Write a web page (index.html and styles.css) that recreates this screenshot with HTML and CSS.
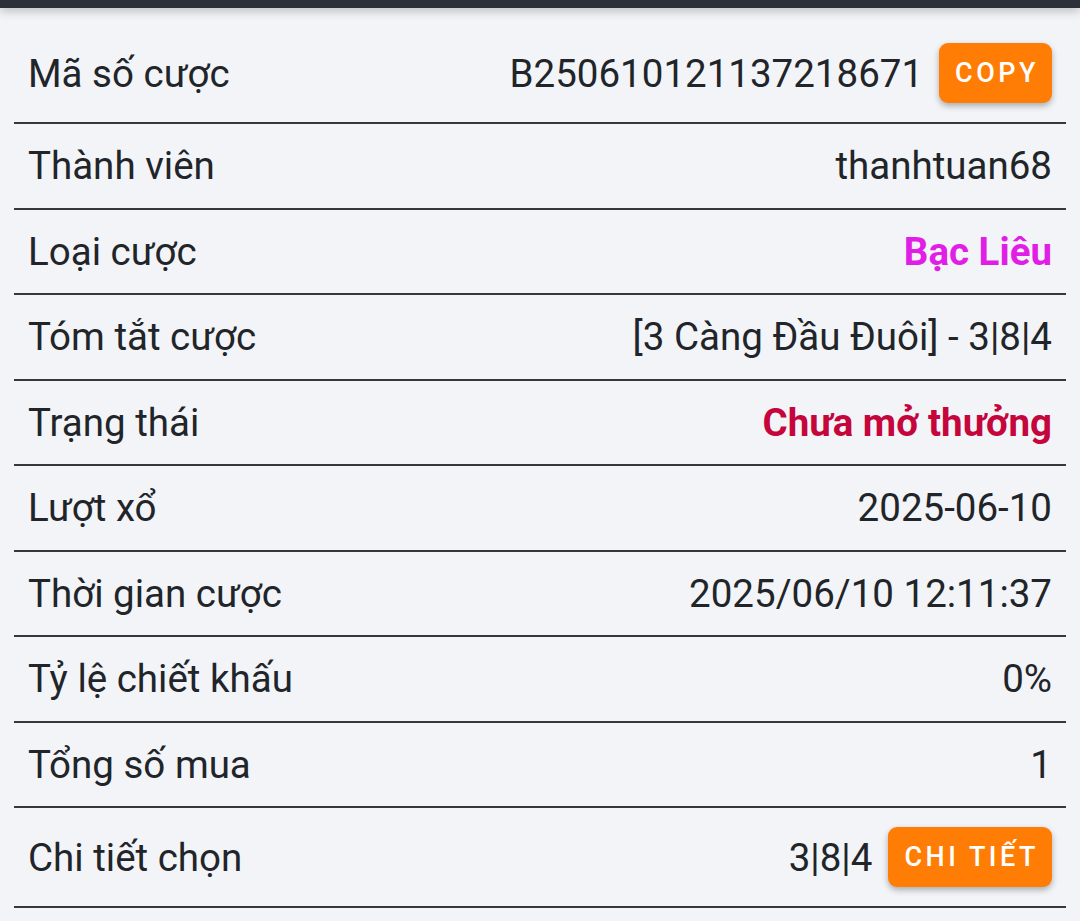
FILE: index.html
```html
<!DOCTYPE html>
<html lang="vi">
<head>
  <meta charset="UTF-8">
  <title>Chi tiết cược</title>
  <meta name="viewport" content="width=device-width, initial-scale=1">
  <link rel="stylesheet" href="styles.css">
</head>
<body>

<div class="topbar"></div>

<div class="details">
  <div class="row row-btn">
    <span class="label">Mã số cược</span>
    <span class="value">B250610121137218671</span>
    <button class="btn">COPY</button>
  </div>
  <div class="row">
    <span class="label">Thành viên</span>
    <span class="value">thanhtuan68</span>
  </div>
  <div class="row">
    <span class="label">Loại cược</span>
    <span class="value pink">Bạc Liêu</span>
  </div>
  <div class="row">
    <span class="label">Tóm tắt cược</span>
    <span class="value">[3 Càng Đầu Đuôi] - 3|8|4</span>
  </div>
  <div class="row">
    <span class="label">Trạng thái</span>
    <span class="value red">Chưa mở thưởng</span>
  </div>
  <div class="row">
    <span class="label">Lượt xổ</span>
    <span class="value">2025-06-10</span>
  </div>
  <div class="row">
    <span class="label">Thời gian cược</span>
    <span class="value">2025/06/10 12:11:37</span>
  </div>
  <div class="row">
    <span class="label">Tỷ lệ chiết khấu</span>
    <span class="value">0%</span>
  </div>
  <div class="row">
    <span class="label">Tổng số mua</span>
    <span class="value">1</span>
  </div>
  <div class="row row-btn">
    <span class="label">Chi tiết chọn</span>
    <span class="value">3|8|4</span>
    <button class="btn">CHI TIẾT</button>
  </div>
</div>

</body>
</html>
```

FILE: styles.css
```css
body {
  margin: 0;
  font-family: Roboto, "Noto Sans", sans-serif;
  background-color: #f3f4f8;
  color: #212529;
}
.topbar {
  height: 8px;
  background: #2b303a;
  box-shadow: 0 3px 10px rgba(0,0,0,0.25);
}
.details {
  margin: 16px 14px 0;
}
.row {
  display: flex;
  align-items: center;
  gap: 16px;
  height: 85.5px;
  box-sizing: border-box;
  padding: 0 14px;
  border-bottom: 2px solid #34373d;
  font-size: 38.5px;
}
.row-btn {
  height: 100px;
}
.label {
  flex: 1;
}
.value {
  text-align: right;
}
.pink {
  color: #e01ee6;
  font-weight: 700;
}
.red {
  color: #c4063c;
  font-weight: 700;
}
.btn {
  height: 60px;
  padding: 0 13px 0 16px;
  background: #ff7d04;
  color: white;
  border: none;
  border-radius: 9px;
  font-family: Roboto, sans-serif;
  font-size: 27px;
  font-weight: 500;
  letter-spacing: 3.5px;
  box-shadow: 0 3px 6px rgba(0,0,0,0.3);
}
```
